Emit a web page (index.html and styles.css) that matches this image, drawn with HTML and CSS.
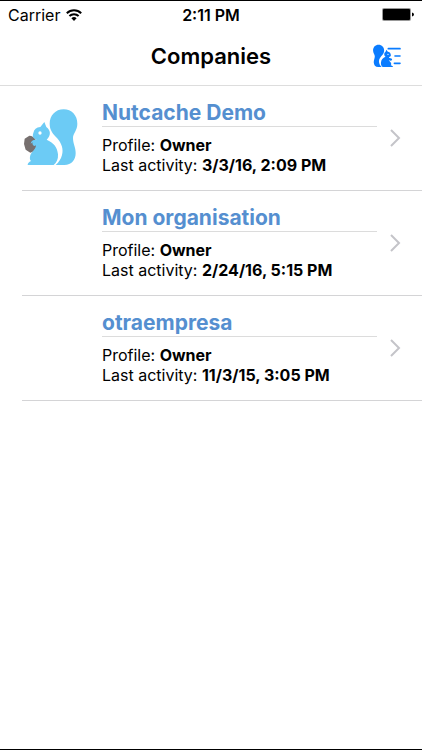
FILE: index.html
```html
<!DOCTYPE html>
<html lang="en">

<head>
    <meta charset="UTF-8">
    <meta name="viewport" content="width=device-width, initial-scale=1.0">
    <title>Companies</title>
    <link rel="stylesheet" href="styles.css">
</head>

<body>
    <div class="status-bar">
        <div class="carrier">
            <span>Carrier</span>
            <svg class="wifi" viewBox="0 0 16 12" aria-hidden="true">
                <path d="M0.8 4.2a10.4 10.4 0 0 1 14.4 0" />
                <path d="M3.4 7a6.6 6.6 0 0 1 9.2 0" />
                <path class="wifi-dot" d="M5.4 9.2a3.8 3.8 0 0 1 5.2 0L8 11.9z" />
            </svg>
        </div>
        <span class="time">2:11 PM</span>
        <svg class="battery" viewBox="0 0 32 13" aria-hidden="true">
            <rect x="0" y="0" width="29" height="13" rx="2" fill="#999" />
            <rect x="1" y="1" width="27" height="11" rx="1" />
            <path d="M30 4.5q2 0.5 2 2t-2 2z" />
        </svg>
    </div>

    <header class="nav-bar">
        <h1>Companies</h1>
        <button type="button" class="menu-button" aria-label="Menu">
            <svg viewBox="0 0 84 72" aria-hidden="true">
                <g transform="translate(75 -9) scale(-0.4 0.4)">
                    <path d="M146 28c-25 0-42 19-42 43 0 20 10 30 22 43 14 16 20 34 15 51-3 13-10 22-19 30h26c22 0 34-16 34-36 0-17-8-28-8-45 0-15 13-22 13-43 0-25-17-43-41-43z" />
                    <path d="M88 66l-12 15c-12 1-19 7-21 18-3 8-2 14 4 17 5 3 8 6 9 10l-17 6c-8 2-10 12-2 15 8 2 14-1 20-5-5 10-16 14-18 27-1 6 0 10 3 14-10 0-16 4-17 12h78c9-7 14-17 13-32-2-24-14-34-34-44 14-13 12-29-1-38z" />
                </g>
                <circle class="icon-eye" cx="45" cy="31" r="2" />
                <path class="icon-lines" d="M46 14H81M66 36h15M64 58h17" />
            </svg>
        </button>
    </header>

    <main>
        <ul class="company-list">
            <li>
                <a href="#" class="company">
                    <div class="logo">
                        <svg viewBox="21 24 168 180" aria-hidden="true">
                            <path class="nut" d="M43 107c8 0 16 5 19 12l2 22c-3 9-10 16-18 17l-14-9-5-17 2-16z" />
                            <g class="squirrel">
                                <path d="M146 28c-25 0-42 19-42 43 0 20 10 30 22 43 14 16 20 34 15 51-3 13-10 22-19 30h26c22 0 34-16 34-36 0-17-8-28-8-45 0-15 13-22 13-43 0-25-17-43-41-43z" />
                                <path d="M88 66l-12 15c-12 1-19 7-21 18-3 8-2 14 4 17l7 4c-8-3-18 2-19 11l6-4c-2 5 0 10 6 11l4-2c-1 15-16 20-18 34-1 6 0 9 3 13-6 3-10 6-10 12h78c9-7 14-17 13-32-2-24-14-34-34-44 14-13 12-29-1-38z" />
                            </g>
                            <circle cx="75" cy="99" r="5" fill="#fff" />
                        </svg>
                    </div>
                    <div class="details">
                        <h2>Nutcache Demo</h2>
                        <p>Profile: <strong>Owner</strong></p>
                        <p>Last activity: <strong>3/3/16, 2:09 PM</strong></p>
                    </div>
                    <svg class="chevron" viewBox="0 0 12 18" aria-hidden="true">
                        <path d="M2 1l8 8-8 8" />
                    </svg>
                </a>
            </li>
            <li>
                <a href="#" class="company">
                    <div class="logo"></div>
                    <div class="details">
                        <h2>Mon organisation</h2>
                        <p>Profile: <strong>Owner</strong></p>
                        <p>Last activity: <strong>2/24/16, 5:15 PM</strong></p>
                    </div>
                    <svg class="chevron" viewBox="0 0 12 18" aria-hidden="true">
                        <path d="M2 1l8 8-8 8" />
                    </svg>
                </a>
            </li>
            <li>
                <a href="#" class="company">
                    <div class="logo"></div>
                    <div class="details">
                        <h2>otraempresa</h2>
                        <p>Profile: <strong>Owner</strong></p>
                        <p>Last activity: <strong>11/3/15, 3:05 PM</strong></p>
                    </div>
                    <svg class="chevron" viewBox="0 0 12 18" aria-hidden="true">
                        <path d="M2 1l8 8-8 8" />
                    </svg>
                </a>
            </li>
        </ul>
    </main>
</body>

</html>
```
FILE: styles.css
```css
* {
    box-sizing: border-box;
}

body {
    font-family: Inter, Roboto, sans-serif;
    background-color: #fff;
    color: #000;
    margin: 0;
    min-height: 100vh;
    border-top: 1px solid #000;
    border-bottom: 1px solid #000;
}

.status-bar {
    display: grid;
    grid-template-columns: 1fr auto 1fr;
    align-items: center;
    height: 27px;
    padding: 0 8px;
    font-size: 16px;
}

.carrier {
    display: flex;
    align-items: center;
    gap: 6px;
}

.wifi {
    width: 16px;
    height: 12px;
    fill: none;
    stroke: #000;
    stroke-width: 2;
}

.wifi .wifi-dot {
    fill: #000;
    stroke: none;
}

.time {
    font-weight: 600;
}

.battery {
    width: 32px;
    height: 13px;
    justify-self: end;
}

.nav-bar {
    display: grid;
    grid-template-columns: 1fr auto 1fr;
    align-items: center;
    height: 58px;
    padding: 0 21px 2px;
    border-bottom: 1px solid #ddd;
}

.nav-bar h1 {
    grid-column: 2;
    margin: 0;
    font-size: 22px;
    font-weight: 600;
}

.menu-button {
    justify-self: end;
    padding: 0;
    border: none;
    background: none;
    cursor: pointer;
}

.menu-button svg {
    display: block;
    width: 28px;
    height: 24px;
    fill: #0a7cff;
}

.menu-button .icon-lines {
    fill: none;
    stroke: #0a7cff;
    stroke-width: 5;
    stroke-linecap: round;
}

.menu-button .icon-eye {
    fill: #fff;
}

.company-list {
    list-style: none;
    margin: 0;
    padding: 0 0 0 22px;
}

.company {
    display: flex;
    align-items: center;
    height: 105px;
    padding-right: 21px;
    border-bottom: 1px solid #d4d4d6;
    color: #000;
    text-decoration: none;
}

.logo {
    width: 56px;
    margin-right: 24px;
}

.logo svg {
    display: block;
    width: 56px;
    height: 60px;
}

.squirrel {
    fill: #6ccbf5;
}

.nut {
    fill: #77706f;
}

.details {
    flex: 1;
    padding-bottom: 2px;
}

.details h2 {
    margin: 0 0 8px;
    border-bottom: 1px solid #dcdcdc;
    color: #558fd0;
    font-size: 21px;
    line-height: 26px;
    font-weight: 700;
}

.details p {
    margin: 0;
    font-size: 16px;
    line-height: 20px;
}

.chevron {
    width: 12px;
    height: 18px;
    margin-left: 12px;
    fill: none;
    stroke: #c4c4c9;
    stroke-width: 2;
}
```
